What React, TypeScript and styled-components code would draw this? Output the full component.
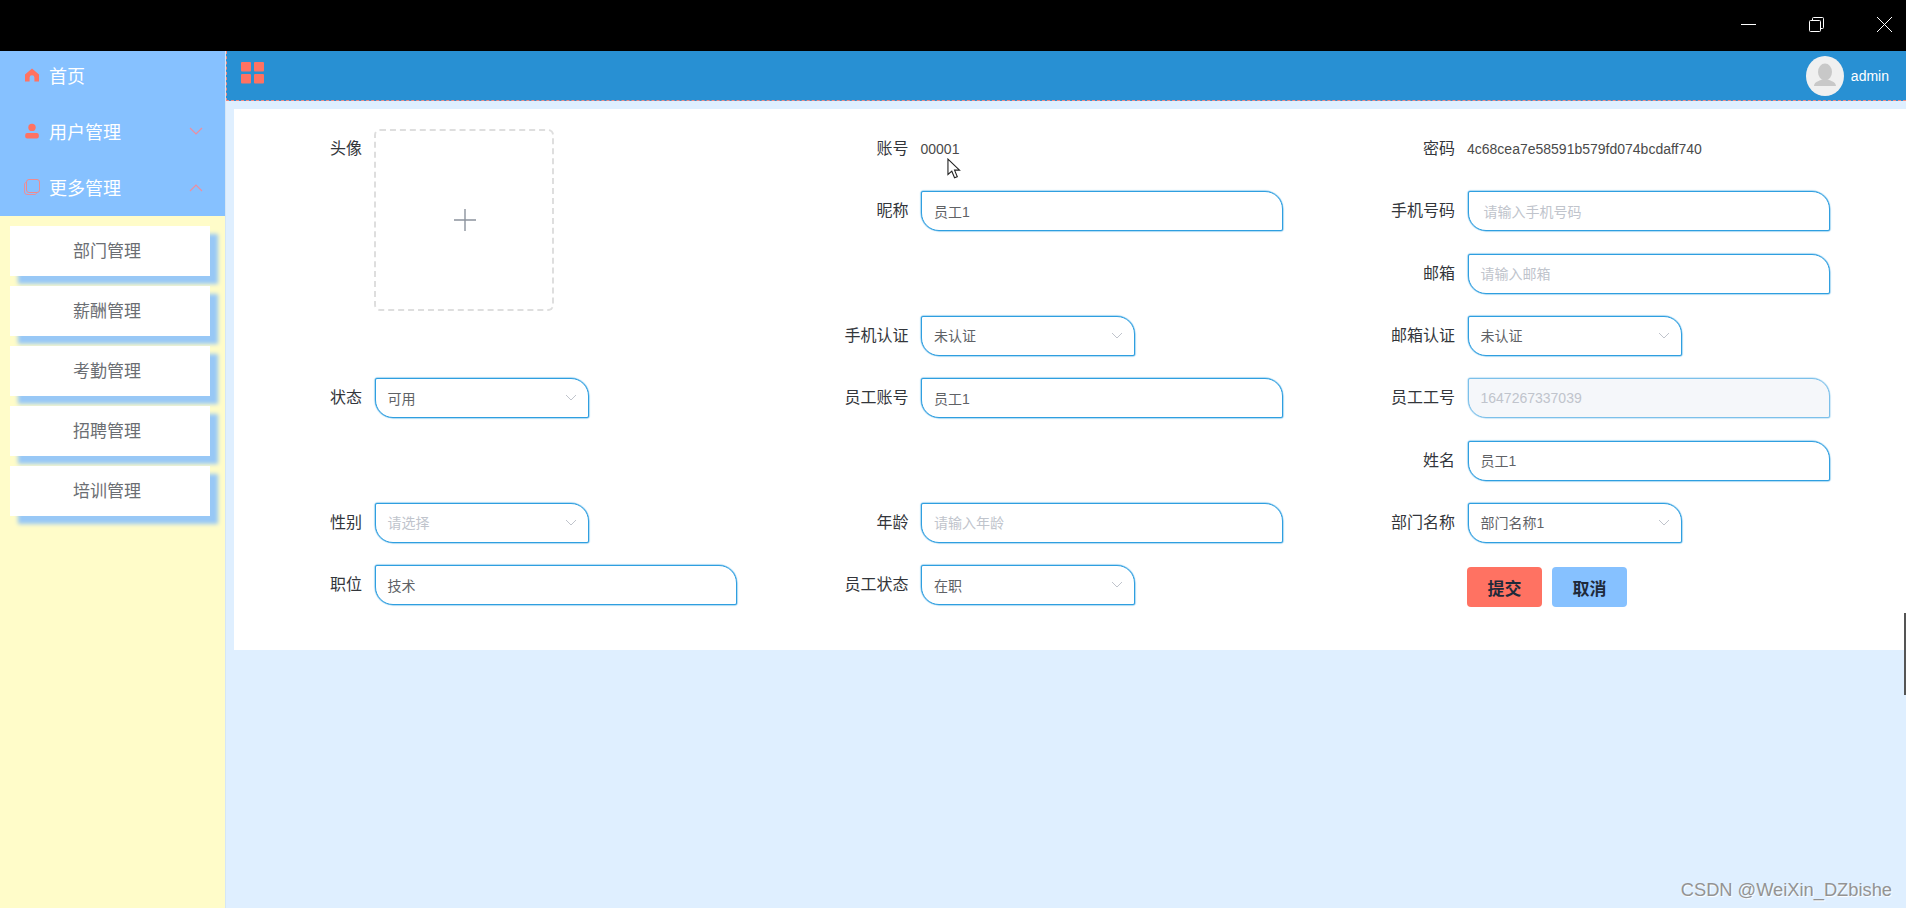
import React from "react"
import styled, { createGlobalStyle } from "styled-components"

const coral = "#ff7262"
const sky = "#86c1ff"

const GlobalStyle = createGlobalStyle`
  html, body {
    margin: 0;
    padding: 0;
    height: 100%;
    overflow: hidden;
    background: #dfefff;
    font-family: "Liberation Sans", "Noto Sans CJK SC", sans-serif;
  }
  * {
    box-sizing: border-box;
  }
`

const Page = styled.div`
  position: relative;
  display: flex;
  flex-direction: column;
  width: 1906px;
  height: 908px;
  overflow: hidden;
`

const TitleBar = styled.div`
  flex: 0 0 51px;
  display: flex;
  justify-content: flex-end;
  align-items: center;
  padding: 0 13px 3px 0;
  gap: 51px;
  background: #000;
  color: #fff;
`

const Body = styled.div`
  flex: 1;
  display: flex;
  min-height: 0;
`

const Sidebar = styled.aside`
  flex: 0 0 226px;
  background: #fffcc9;
  border-right: 1px solid #d5e6f5;
`

const MenuGroup = styled.div`
  height: 165px;
  background: ${sky};
`

const MenuItem = styled.div`
  display: flex;
  align-items: center;
  height: 56px;
  padding: 0 22px 8px 24px;
  color: #fff;
  font-size: 18px;
  gap: 9px;
`

const MenuLabel = styled.span`
  flex: 1;
`

const SubMenu = styled.div`
  display: flex;
  flex-direction: column;
  gap: 10px;
  padding: 10px 15px 0 10px;
`

const SubItem = styled.div`
  height: 50px;
  line-height: 52px;
  padding-right: 6px;
  text-align: center;
  font-size: 17px;
  color: #6b6e73;
  background: #fff;
  box-shadow: 8px 8px 4px #98c8f6;
`

const Main = styled.main`
  flex: 1;
  display: flex;
  flex-direction: column;
  min-width: 0;
`

const Header = styled.header`
  flex: 0 0 50px;
  display: flex;
  align-items: center;
  justify-content: space-between;
  padding: 0 17px 0 14px;
  background: #2890d3;
  border-left: 1px dashed #f08a85;
  border-bottom: 1px dashed #f08a85;
`

const MenuToggle = styled.svg`
  margin-bottom: 6px;
`

const Avatar = styled.div`
  width: 38px;
  height: 40px;
  border-radius: 50%;
  background: #f0f0f0;
  overflow: hidden;
`

const UserBlock = styled.div`
  display: flex;
  align-items: center;
  gap: 7px;
  color: #fff;
  font-size: 14px;
`

const Content = styled.div`
  flex: 1;
  padding: 8px 0 0 8px;
`

const Card = styled.section`
  height: 541px;
  padding: 20px 0 0 40px;
  background: #fff;
`

const FormGrid = styled.div`
  display: grid;
  grid-template-columns: repeat(3, 546.5px);
  grid-template-rows: repeat(8, 40px);
  row-gap: 22.33px;
`

const Field = styled.div<{ $rows?: number }>`
  display: grid;
  grid-template-columns: 88px 1fr;
  column-gap: 12px;
  align-items: start;
  min-width: 0;
  grid-row: span ${p => p.$rows ?? 1};
`

const Label = styled.label`
  line-height: 39px;
  text-align: right;
  font-size: 16px;
  color: #33363b;
`

const PlainValue = styled.span`
  line-height: 40px;
  font-size: 14px;
  color: #4a4a4a;
`

const Box = styled.div<{ $short?: boolean; $disabled?: boolean }>`
  display: flex;
  align-items: center;
  justify-content: space-between;
  width: ${p => (p.$short ? 214 : 362)}px;
  height: 40px;
  margin-left: 0.5px;
  padding: 0 11px 1px 12px;
  border: 1px solid ${p => (p.$disabled ? "#7cc0ea" : "#2f9fe0")};
  border-radius: 2px 18px 2px 18px;
  background: ${p => (p.$disabled ? "#f5f7fa" : "#fff")};
  box-shadow: 0 0 1px 0.5px ${p => (p.$disabled ? "#a8d6f2" : "#6dbbea")};
`

const BoxText = styled.span<{ $muted?: boolean; $indent?: boolean }>`
  font-size: 14px;
  color: ${p => (p.$muted ? "#c0c4cc" : "#606266")};
  margin-left: ${p => (p.$indent ? 3 : 0)}px;
`

const UploadBox = styled.div`
  display: flex;
  align-items: center;
  justify-content: center;
  width: 180px;
  height: 182px;
  padding-left: 2px;
  border: 2px dashed #dedede;
  border-radius: 6px;
`

const Actions = styled.div`
  display: flex;
  gap: 10px;
  padding: 2px 0 0 100px;
`

const ActionButton = styled.button<{ $tone: string }>`
  width: 75px;
  height: 40px;
  border: 0;
  border-radius: 4px;
  background: ${p => p.$tone};
  color: #1f2a3a;
  font-family: inherit;
  font-size: 17px;
  font-weight: 700;
`

const Cursor = styled.svg`
  position: absolute;
  left: 946px;
  top: 158px;
`

const Watermark = styled.div`
  position: absolute;
  right: 14px;
  bottom: 7px;
  font-size: 18.3px;
  color: #939393;
  text-shadow: 1px 1px 1px #fff;
`

const EdgeMark = styled.div`
  position: absolute;
  right: 0;
  top: 613px;
  width: 2px;
  height: 82px;
  background: #555;
`

const HomeIcon = () => (
  <svg width="16" height="16" viewBox="0 0 16 16">
    <path
      fill={coral}
      d="M8 1.5 15 7.6V14.5H10.4V10.6A2.4 2.4 0 0 0 5.6 10.6V14.5H1V7.6Z"
    />
  </svg>
)

const UserIcon = () => (
  <svg width="16" height="16" viewBox="0 0 16 16">
    <circle cx="8" cy="4.4" r="3.7" fill={coral} />
    <rect x="1.2" y="10" width="13.6" height="5.4" rx="2" fill={coral} />
  </svg>
)

const CopyIcon = () => (
  <svg width="16" height="16" viewBox="0 0 16 16" fill="none">
    <rect x="2.5" y="0.5" width="13" height="13" rx="2.5" stroke="#f08a8e" />
    <path
      d="M2.500 3C1 3.500 0.500 4.500 0.500 6V13A2.500 2.500 0 0 0 3 15.500H10C11.500 15.500 12.500 15 13 13.500"
      stroke="#e98f9c"
    />
  </svg>
)

const MenuChevron = ({ up }: { up?: boolean }) => (
  <svg width="14" height="9" viewBox="0 0 14 9" fill="none">
    <path
      d={up ? "M1 8 7 2l6 6" : "M1 1l6 6 6-6"}
      stroke="#ee8d9e"
      strokeWidth="1.2"
    />
  </svg>
)

const SelectChevron = () => (
  <svg width="12" height="7" viewBox="0 0 12 7" fill="none">
    <path d="M1 1l5 5 5-5" stroke="#c0c4cc" strokeWidth="1" />
  </svg>
)

const WindowIcon = ({ children }: { children: React.ReactNode }) => (
  <svg width="17" height="17" viewBox="0 0 17 17" fill="none" stroke="#fff">
    {children}
  </svg>
)

const TextInput = ({
  value,
  placeholder,
  disabled,
  indent,
}: {
  value?: string
  placeholder?: string
  disabled?: boolean
  indent?: boolean
}) => (
  <Box $disabled={disabled}>
    <BoxText $muted={!value || disabled} $indent={indent}>
      {value || placeholder}
    </BoxText>
  </Box>
)

const SelectInput = ({
  value,
  placeholder,
}: {
  value?: string
  placeholder?: string
}) => (
  <Box $short>
    <BoxText $muted={!value}>{value || placeholder}</BoxText>
    <SelectChevron />
  </Box>
)

const subMenus = ["部门管理", "薪酬管理", "考勤管理", "招聘管理", "培训管理"]

export default function App() {
  return (
    <Page>
      <GlobalStyle />
      <TitleBar>
        <WindowIcon>
          <path d="M1 8.5h15" />
        </WindowIcon>
        <WindowIcon>
          <rect x="1.5" y="4.5" width="11" height="11" rx="1" />
          <path d="M4.5 4.5V2.5a1 1 0 0 1 1-1h9a1 1 0 0 1 1 1v9a1 1 0 0 1-1 1h-2" />
        </WindowIcon>
        <WindowIcon>
          <path d="M1 1l15 15M16 1 1 16" />
        </WindowIcon>
      </TitleBar>
      <Body>
        <Sidebar>
          <MenuGroup>
            <MenuItem>
              <HomeIcon />
              <MenuLabel>首页</MenuLabel>
            </MenuItem>
            <MenuItem>
              <UserIcon />
              <MenuLabel>用户管理</MenuLabel>
              <MenuChevron />
            </MenuItem>
            <MenuItem>
              <CopyIcon />
              <MenuLabel>更多管理</MenuLabel>
              <MenuChevron up />
            </MenuItem>
          </MenuGroup>
          <SubMenu>
            {subMenus.map(name => (
              <SubItem key={name}>{name}</SubItem>
            ))}
          </SubMenu>
        </Sidebar>
        <Main>
          <Header>
            <MenuToggle width="23" height="22" viewBox="0 0 23 22">
              <rect x="0" y="0" width="10" height="9.5" rx="1" fill={coral} />
              <rect x="13" y="0" width="10" height="9.5" rx="1" fill={coral} />
              <rect x="0" y="12" width="10" height="9.5" rx="1" fill={coral} />
              <rect x="13" y="12" width="10" height="9.5" rx="1" fill={coral} />
            </MenuToggle>
            <UserBlock>
              <Avatar>
                <svg width="38" height="40" viewBox="0 0 38 40">
                  <ellipse cx="19" cy="16" rx="7" ry="8.5" fill="#c8c8c8" />
                  <path
                    d="M8 30c0-4 5-5 8-6.5h6c3 1.5 8 2.5 8 6.5Z"
                    fill="#c8c8c8"
                  />
                </svg>
              </Avatar>
              admin
            </UserBlock>
          </Header>
          <Content>
            <Card>
              <FormGrid>
                <Field $rows={3}>
                  <Label>头像</Label>
                  <UploadBox>
                    <svg width="24" height="24" viewBox="0 0 24 24">
                      <path
                        d="M12 1v22M1 12h22"
                        stroke="#8c939d"
                        strokeWidth="1.4"
                      />
                    </svg>
                  </UploadBox>
                </Field>
                <Field>
                  <Label>账号</Label>
                  <PlainValue>00001</PlainValue>
                </Field>
                <Field>
                  <Label>密码</Label>
                  <PlainValue>4c68cea7e58591b579fd074bcdaff740</PlainValue>
                </Field>

                <Field>
                  <Label>昵称</Label>
                  <TextInput value="员工1" />
                </Field>
                <Field>
                  <Label>手机号码</Label>
                  <TextInput placeholder="请输入手机号码" indent />
                </Field>

                <div />
                <Field>
                  <Label>邮箱</Label>
                  <TextInput placeholder="请输入邮箱" />
                </Field>

                <div />
                <Field>
                  <Label>手机认证</Label>
                  <SelectInput value="未认证" />
                </Field>
                <Field>
                  <Label>邮箱认证</Label>
                  <SelectInput value="未认证" />
                </Field>

                <Field>
                  <Label>状态</Label>
                  <SelectInput value="可用" />
                </Field>
                <Field>
                  <Label>员工账号</Label>
                  <TextInput value="员工1" />
                </Field>
                <Field>
                  <Label>员工工号</Label>
                  <TextInput value="1647267337039" disabled />
                </Field>

                <div />
                <div />
                <Field>
                  <Label>姓名</Label>
                  <TextInput value="员工1" />
                </Field>

                <Field>
                  <Label>性别</Label>
                  <SelectInput placeholder="请选择" />
                </Field>
                <Field>
                  <Label>年龄</Label>
                  <TextInput placeholder="请输入年龄" />
                </Field>
                <Field>
                  <Label>部门名称</Label>
                  <SelectInput value="部门名称1" />
                </Field>

                <Field>
                  <Label>职位</Label>
                  <TextInput value="技术" />
                </Field>
                <Field>
                  <Label>员工状态</Label>
                  <SelectInput value="在职" />
                </Field>
                <Actions>
                  <ActionButton $tone={coral}>提交</ActionButton>
                  <ActionButton $tone={sky}>取消</ActionButton>
                </Actions>
              </FormGrid>
            </Card>
          </Content>
        </Main>
      </Body>
      <Cursor width="16" height="22" viewBox="0 0 14 20">
        <path
          d="M1.5 1v14l3.500-3 2.500 6 2.500-1-2.500-6h4.500Z"
          fill="#fff"
          stroke="#222"
          strokeWidth="1"
        />
      </Cursor>
      <EdgeMark />
      <Watermark>CSDN @WeiXin_DZbishe</Watermark>
    </Page>
  )
}
